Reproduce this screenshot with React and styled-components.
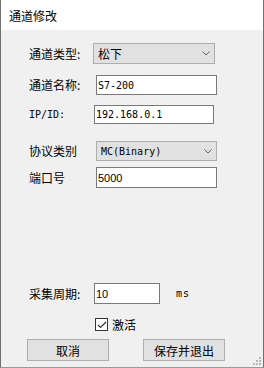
import React, { useState } from "react";
import styled, { createGlobalStyle } from "styled-components";

const GlobalStyle = createGlobalStyle`
  html, body { margin: 0; padding: 0; background: #f0f0f0; }
  * { box-sizing: border-box; }
`;

const cjk = `"Noto Sans CJK SC", "Noto Sans", sans-serif`;
const mono = `"DejaVu Sans Mono", "Liberation Mono", monospace`;

const Window = styled.div`
  position: relative;
  width: 264px;
  height: 368px;
  background: #f0f0f0;
  border-left: 1px solid #707070;
  border-right: 1px solid #707070;
  border-bottom: 1px solid #9a9a9a;
  display: flex;
  flex-direction: column;
  font-family: ${cjk};
  font-size: 12px;
  color: #000;
  overflow: hidden;
`;

const TitleBar = styled.div`
  height: 30px;
  flex: none;
  background: #fff;
  display: flex;
  align-items: center;
  padding-left: 8px;
  font-size: 12px;
`;

const Form = styled.div`
  display: flex;
  flex-direction: column;
  padding-left: 28px;
`;

const Row = styled.div`
  display: flex;
  align-items: center;
  height: ${(p) => p.$h || 21}px;
  margin-top: ${(p) => p.$gap}px;
`;

const Label = styled.span`
  width: ${(p) => p.$w}px;
  flex: none;
  font-family: ${(p) => (p.$mono ? mono : cjk)};
  font-size: ${(p) => (p.$mono ? "10px" : "12px")};
  line-height: 1;
`;

const Combo = styled.div`
  width: ${(p) => p.$w}px;
  height: 100%;
  background: #e1e1e1;
  border: 1px solid #adadad;
  display: flex;
  align-items: center;
  justify-content: space-between;
  padding: 0 4px 0 4px;
  font-family: ${(p) => (p.$mono ? mono : cjk)};
  font-size: ${(p) => (p.$mono ? "10px" : "12px")};
`;

const Input = styled.input`
  width: ${(p) => p.$w}px;
  height: 100%;
  background: #fff;
  border: 1px solid #7a7a7a;
  padding: 0 1px;
  margin: 0;
  outline: none;
  color: #000;
  font-family: ${(p) => (p.$mono ? mono : `"Liberation Sans", Arial, sans-serif`)};
  font-size: ${(p) => (p.$mono ? "10px" : "11px")};
`;

const Unit = styled.span`
  margin-left: 16px;
  font-family: ${mono};
  font-size: 10px;
  letter-spacing: 1px;
`;

const CheckRow = styled.label`
  display: flex;
  align-items: center;
  gap: 4px;
  height: 13px;
  margin-top: 14px;
  padding-left: 94px;
  cursor: pointer;
`;

const Box = styled.span`
  width: 13px;
  height: 13px;
  border: 1px solid #333;
  background: #fff;
  display: flex;
  align-items: center;
  justify-content: center;
`;

const Buttons = styled.div`
  display: flex;
  gap: 34px;
  margin-top: 8px;
  padding-left: 26px;
`;

const Button = styled.button`
  width: 82px;
  height: 22px;
  background: #e1e1e1;
  border: 1px solid #adadad;
  font-family: ${cjk};
  font-size: 12px;
  color: #000;
  padding: 0;
  cursor: pointer;
`;

const Grip = styled.svg`
  position: absolute;
  right: 1px;
  bottom: 1px;
`;

const Chevron = () => (
  <svg width="8" height="5" viewBox="0 0 8 5">
    <polyline points="0.5,0.5 4,4 7.5,0.5" fill="none" stroke="#606060" strokeWidth="1" />
  </svg>
);

export default function App() {
  const [active, setActive] = useState(true);

  return (
    <>
      <GlobalStyle />
      <Window>
        <TitleBar>通道修改</TitleBar>
        <Form>
          <Row $gap={13} $h={21}>
            <Label $w={64}>通道类型:</Label>
            <Combo $w={122}>
              <span>松下</span>
              <Chevron />
            </Combo>
          </Row>
          <Row $gap={11} $h={20}>
            <Label $w={67}>通道名称:</Label>
            <Input $w={121} $mono defaultValue="S7-200" />
          </Row>
          <Row $gap={10} $h={19}>
            <Label $w={65} $mono>IP/ID:</Label>
            <Input $w={120} $mono defaultValue="192.168.0.1" />
          </Row>
          <Row $gap={17} $h={20}>
            <Label $w={67}>协议类别</Label>
            <Combo $w={121} $mono>
              <span>MC(Binary)</span>
              <Chevron />
            </Combo>
          </Row>
          <Row $gap={6} $h={21}>
            <Label $w={67}>端口号</Label>
            <Input $w={121} defaultValue="5000" />
          </Row>
          <Row $gap={95} $h={21}>
            <Label $w={65}>采集周期:</Label>
            <Input $w={66} defaultValue="10" />
            <Unit>ms</Unit>
          </Row>
        </Form>
        <CheckRow onClick={() => setActive(!active)}>
          <Box>
            {active && (
              <svg width="10" height="8" viewBox="0 0 10 8">
                <polyline points="1,4 3.5,6.5 9,1" fill="none" stroke="#333" strokeWidth="1.2" />
              </svg>
            )}
          </Box>
          <span>激活</span>
        </CheckRow>
        <Buttons>
          <Button>取消</Button>
          <Button>保存并退出</Button>
        </Buttons>
        <Grip width="10" height="10" viewBox="0 0 10 10">
          {[[8, 2], [8, 5], [5, 5], [8, 8], [5, 8], [2, 8]].map(([x, y]) => (
            <rect key={`${x}-${y}`} x={x - 1} y={y - 1} width="2" height="2" fill="#b8b8b8" />
          ))}
        </Grip>
      </Window>
    </>
  );
}
